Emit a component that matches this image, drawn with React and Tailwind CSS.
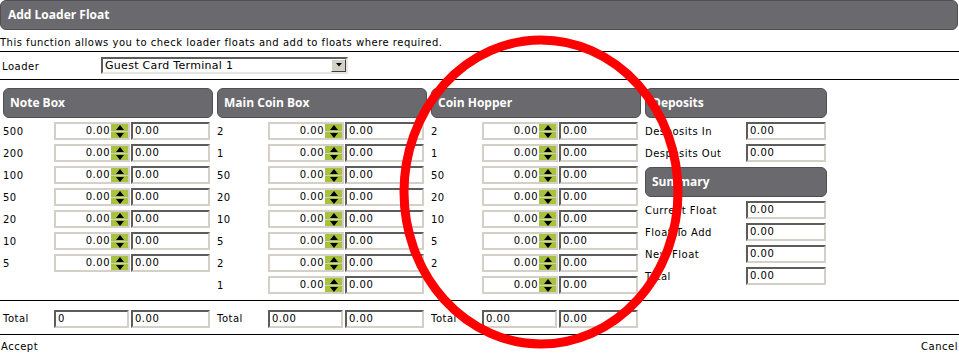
import React from 'react';

const noteBox = ['500', '200', '100', '50', '20', '10', '5'];
const mainCoin = ['2', '1', '50', '20', '10', '5', '2', '1'];
const hopper = ['2', '1', '50', '20', '10', '5', '2', '1'];

const Header = ({ title }) => (
  <div className="h-[30px] rounded-[6px] bg-[#6a6a6e] border border-[#4f4f53] flex items-center pl-[6px] text-white text-[12px] font-bold tracking-normal font-['Open_Sans',sans-serif]">
    {title}
  </div>
);

const InsetInput = ({ value = '0.00', w = 'w-[79px]' }) => (
  <div className={`${w} h-[18px] bg-white border-2 border-t-[#5c5c5c] border-l-[#5c5c5c] border-r-[#d4d0c8] border-b-[#d4d0c8] flex items-center pl-[2px] text-[10px] leading-none`}>
    {value}
  </div>
);

const Spinner = () => (
  <div className="w-[17px] h-full flex flex-col gap-px">
    <div className="flex-1 bg-[#a8c23d] flex items-end justify-center pb-px">
      <svg width="8" height="5" viewBox="0 0 8 5">
        <polygon points="0,5 4,0 8,5" fill="#000" />
      </svg>
    </div>
    <div className="flex-1 bg-[#a8c23d] flex items-start justify-center pt-px">
      <svg width="8" height="5" viewBox="0 0 8 5">
        <polygon points="0,0 8,0 4,5" fill="#000" />
      </svg>
    </div>
  </div>
);

const SpinInput = () => (
  <div className="w-[76px] h-[18px] border-2 border-[#d4d0c8] bg-[#d4d0c8] flex">
    <div className="flex-1 bg-white flex items-center justify-end text-[10px] leading-none pr-px">0.00</div>
    <Spinner />
  </div>
);

const DenomRow = ({ label }) => (
  <div className="h-[22px] flex items-center">
    <div className="w-[51px]">{label}</div>
    <SpinInput />
    <div className="ml-px">
      <InsetInput />
    </div>
  </div>
);

const Section = ({ title, rows }) => (
  <div className="w-[210px]">
    <Header title={title} />
    <div className="mt-[2px]">
      {rows.map((r, i) => (
        <DenomRow key={i} label={r} />
      ))}
    </div>
  </div>
);

const FieldRow = ({ label }) => (
  <div className="h-[22px] flex items-center">
    <div className="w-[101px]">{label}</div>
    <InsetInput w="w-[80px]" />
  </div>
);

const TotalCell = ({ first }) => (
  <div className="w-[210px] flex items-center">
    <div className="w-[51px]">Total</div>
    <InsetInput value={first} w="w-[75px]" />
    <div className="ml-[2px]">
      <InsetInput />
    </div>
  </div>
);

export default function App() {
  return (
    <div className="relative w-[959px] h-[353px] bg-white text-black text-[10px] tracking-[0.5px] font-['DejaVu_Sans',sans-serif] overflow-hidden">
      <div className="w-[958px] h-[30px] rounded-[6px] bg-[#6a6a6e] border border-[#4f4f53] flex items-center pl-[7px] text-white text-[12px] font-bold tracking-normal font-['Open_Sans',sans-serif]">
        Add Loader Float
      </div>

      <div className="h-[22px] border-b border-black flex items-center pt-[3px]">
        This function allows you to check loader floats and add to floats where required.
      </div>

      <div className="h-[28px] border-b border-black flex items-center pb-[1px]">
        <div className="w-[101px] pl-[2px] pt-[3px]">Loader</div>
        <div className="w-[247px] h-[17px] bg-white border-2 border-t-[#5c5c5c] border-l-[#5c5c5c] border-r-[#e8e6e0] border-b-[#e8e6e0] flex items-center">
          <div className="flex-1 pl-[2px] text-[11px] tracking-[0.3px] leading-none">Guest Card Terminal 1</div>
          <div className="w-[15px] h-[13px] bg-[#d4d0c8] border border-t-white border-l-white border-r-[#404040] border-b-[#404040] flex items-center justify-center">
            <svg width="6" height="4" viewBox="0 0 6 4">
              <polygon points="0,0 6,0 3,3.5" fill="#000" />
            </svg>
          </div>
        </div>
      </div>

      <div className="h-[221px] border-b border-black pt-[8px] pl-[3px] flex gap-[4px]">
        <Section title="Note Box" rows={noteBox} />
        <Section title="Main Coin Box" rows={mainCoin} />
        <Section title="Coin Hopper" rows={hopper} />
        <div className="w-[182px]">
          <Header title="Deposits" />
          <div className="mt-[2px]">
            <FieldRow label="Desposits In" />
            <FieldRow label="Desposits Out" />
          </div>
          <div className="mt-[3px]">
            <Header title="Summary" />
          </div>
          <div className="mt-[2px]">
            <FieldRow label="Current Float" />
            <FieldRow label="Float To Add" />
            <FieldRow label="New Float" />
            <FieldRow label="Total" />
          </div>
        </div>
      </div>

      <div className="h-[34px] border-b border-black pl-[3px] pt-[2px] flex items-center gap-[4px]">
        <TotalCell first="0" />
        <TotalCell first="0.00" />
        <TotalCell first="0.00" />
      </div>

      <div className="h-[18px] flex justify-between items-end px-[1px] leading-[12px]">
        <span>Accept</span>
        <span>Cancel</span>
      </div>

      <svg className="absolute inset-0 pointer-events-none" width="959" height="353" viewBox="0 0 959 353">
        <ellipse cx="541" cy="192" rx="137" ry="152" fill="none" stroke="#ff0000" strokeWidth="9" />
      </svg>
    </div>
  );
}
